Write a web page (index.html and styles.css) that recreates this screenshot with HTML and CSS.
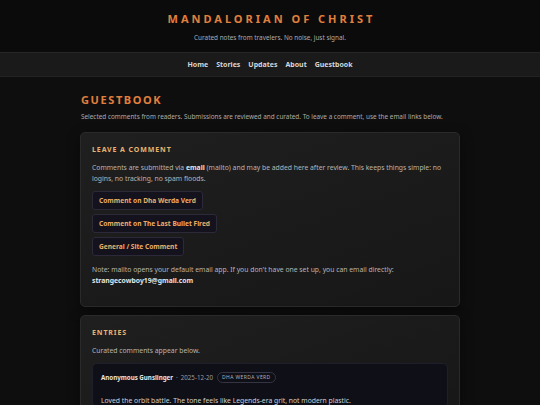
FILE: index.html
```html
<!DOCTYPE html>
<html lang="en">
<head>
<meta charset="utf-8">
<title>Guestbook — Mandalorian of Christ</title>
<link rel="stylesheet" href="styles.css">
</head>
<body>
<header class="site-header">
  <h1 class="brand">MANDALORIAN OF CHRIST</h1>
  <p class="tagline">Curated notes from travelers. No noise, just signal.</p>
</header>
<nav class="site-nav">
  <a href="#">Home</a>
  <a href="#">Stories</a>
  <a href="#">Updates</a>
  <a href="#">About</a>
  <a href="#">Guestbook</a>
</nav>
<main class="page">
  <h2 class="page-title">GUESTBOOK</h2>
  <p class="lead">Selected comments from readers. Submissions are reviewed and curated. To leave a comment, use the email links below.</p>

  <section class="card">
    <h3 class="card-title">LEAVE A COMMENT</h3>
    <p class="card-text">Comments are submitted via <strong>email</strong> (mailto) and may be added here after review. This keeps things simple: no logins, no tracking, no spam floods.</p>
    <div class="actions">
      <a class="btn" href="#">Comment on Dha Werda Verd</a>
      <a class="btn" href="#">Comment on The Last Bullet Fired</a>
      <a class="btn" href="#">General / Site Comment</a>
    </div>
    <p class="card-text note">Note: mailto opens your default email app. If you don't have one set up, you can email directly:<br><strong>strangecowboy19@gmail.com</strong></p>
  </section>

  <section class="card">
    <h3 class="card-title">ENTRIES</h3>
    <p class="card-text">Curated comments appear below.</p>
    <article class="entry">
      <div class="entry-meta">
        <span class="author">Anonymous Gunslinger</span>
        <span class="sep">·</span>
        <span class="date">2025-12-20</span>
        <span class="tag">DHA WERDA VERD</span>
      </div>
      <p class="entry-text">Loved the orbit battle. The tone feels like Legends-era grit, not modern plastic.</p>
    </article>
  </section>
</main>
</body>
</html>
```

FILE: styles.css
```css
* { box-sizing: border-box; }

html, body {
  margin: 0;
  padding: 0;
  background: #0e0e0e;
  color: #c4c4c4;
  font-family: "Noto Sans", "Open Sans", "DejaVu Sans", sans-serif;
}

.site-header {
  background: #0b0b0b;
  text-align: center;
  padding: 12px 0 9px;
}

.brand {
  margin: 0;
  font-size: 11px;
  line-height: 14px;
  font-weight: 700;
  letter-spacing: 3px;
  padding-left: 3px;
  color: #e0803e;
}

.tagline {
  margin: 7px 0 0;
  font-size: 6.4px;
  line-height: 10px;
  color: #ababab;
}

.site-nav {
  display: flex;
  justify-content: center;
  gap: 8px;
  background: #1a1a1a;
  border-top: 1px solid #262626;
  border-bottom: 1px solid #222222;
  height: 25px;
  align-items: center;
}

.site-nav a {
  color: #d6d6d6;
  text-decoration: none;
  font-weight: 700;
  font-size: 7px;
}

.page {
  width: 380px;
  margin: 0 auto;
  padding-top: 16px;
}

.page-title {
  margin: 0 0 0 1px;
  font-size: 11px;
  line-height: 14px;
  font-weight: 700;
  letter-spacing: 1.6px;
  color: #e0803e;
}

.lead {
  margin: 5px 0 10px 1px;
  font-size: 6.4px;
  line-height: 10px;
  color: #ababab;
}

.card {
  background: linear-gradient(160deg, #1f1f1f 0%, #171717 100%);
  border: 1px solid #2a2a2a;
  border-radius: 5px;
  padding: 12px 11px 20px;
  margin-bottom: 8px;
  box-shadow: 0 4px 14px rgba(0, 0, 0, 0.45);
}

.card-title {
  margin: 0;
  font-size: 7px;
  line-height: 9px;
  font-weight: 700;
  letter-spacing: 0.9px;
  color: #e8b46f;
}

.card-text {
  margin: 8px 0 0;
  font-size: 6.8px;
  line-height: 11px;
  color: #b6b6b6;
}

.card-text strong { color: #e4e4e4; }

.actions {
  display: flex;
  flex-direction: column;
  align-items: flex-start;
  gap: 4px;
  margin-top: 7px;
}

.btn {
  display: inline-block;
  background: #14121c;
  border: 1px solid #2c2939;
  border-radius: 3px;
  color: #e9ae68;
  font-size: 6.6px;
  font-weight: 700;
  line-height: 17px;
  padding: 0 6px;
  text-decoration: none;
}

.note { margin-top: 8px; }

.entry {
  background: #0f0f17;
  border: 1px solid #1f1f2b;
  border-radius: 5px;
  margin-top: 7px;
  padding: 8px 8px 0;
}

.entry-meta {
  display: flex;
  align-items: center;
  gap: 3px;
  font-size: 6.2px;
}

.author { font-weight: 700; color: #e6e6e6; }
.sep { color: #8a8a8a; }
.date { color: #9c9c9c; }

.tag {
  margin-left: 1px;
  border: 1px solid #343443;
  border-radius: 6px;
  padding: 0 4px;
  line-height: 9px;
  font-size: 5px;
  letter-spacing: 0.4px;
  color: #b0b0b8;
}

.entry-text {
  margin: 12px 0 0;
  font-size: 6.8px;
  line-height: 11px;
  color: #d0d0d0;
}
```
